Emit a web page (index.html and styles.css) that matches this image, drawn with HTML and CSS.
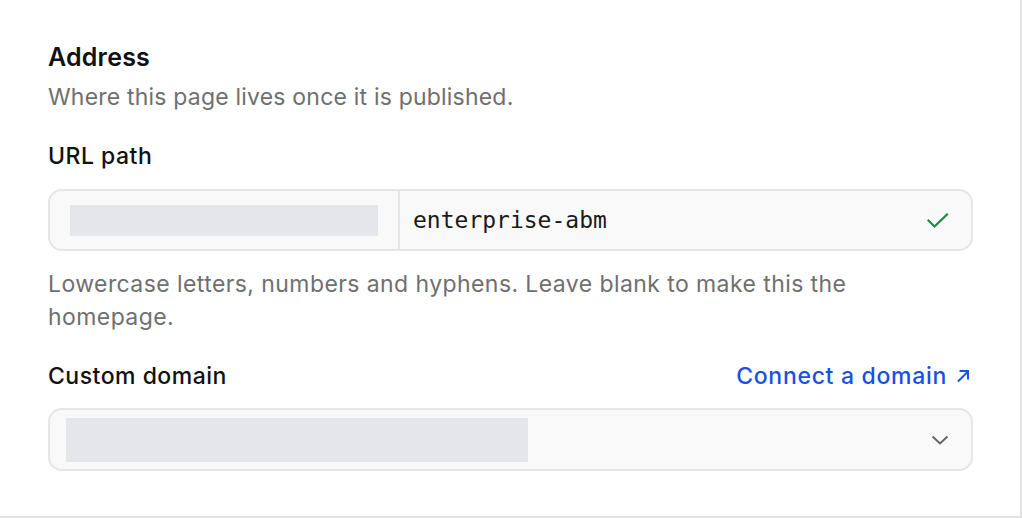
FILE: index.html
```html
<!DOCTYPE html>
<html lang="en">
<head>
<meta charset="utf-8">
<title>Address settings</title>
<link rel="stylesheet" href="styles.css">
</head>
<body>
<section class="panel">
  <h2 class="title">Address</h2>
  <p class="subtitle">Where this page lives once it is published.</p>

  <div class="field url-field">
    <label class="label" for="path">URL path</label>
    <div class="input-group">
      <div class="prefix"><span class="skeleton prefix-skel"></span></div>
      <div class="path">
        <span class="path-text" id="path">enterprise-abm</span>
        <svg class="check" width="22" height="16" viewBox="0 0 22 16" aria-hidden="true">
          <path d="M1.5 7.5 L7.5 13.5 L20 1.5" fill="none" stroke="#1f8a47" stroke-width="2.2" stroke-linecap="square" stroke-linejoin="miter"/>
        </svg>
      </div>
    </div>
    <p class="helper">Lowercase letters, numbers and hyphens. Leave blank to make this the homepage.</p>
  </div>

  <div class="field domain-field">
    <div class="label-row">
      <span class="label">Custom domain</span>
      <a class="link" href="#">Connect a domain <svg class="arrow" width="14" height="14" viewBox="0 0 14 14" aria-hidden="true"><path d="M2 12.5 L12 2.5 M3.5 2 H12 V10.5" fill="none" stroke="currentColor" stroke-width="2"/></svg></a>
    </div>
    <div class="select">
      <span class="skeleton select-skel"></span>
      <svg class="chevron" width="18" height="10" viewBox="0 0 18 10" aria-hidden="true">
        <path d="M1.5 1.5 L9 8.5 L16.5 1.5" fill="none" stroke="#666" stroke-width="2"/>
      </svg>
    </div>
  </div>
</section>
</body>
</html>
```
FILE: styles.css
```css
* { box-sizing: border-box; }
html, body { margin: 0; padding: 0; background: #fff; }
body {
  font-family: Inter, "Noto Sans", "Liberation Sans", sans-serif;
  color: #111;
}
.panel {
  width: 1022px;
  height: 518px;
  border-right: 2px solid #e3e3e3;
  border-bottom: 2px solid #e3e3e3;
  padding: 43px 47px 0 48px;
  overflow: hidden;
}
.title {
  margin: 0;
  font-size: 25px;
  line-height: 28px;
  font-weight: 600;
  letter-spacing: 0.2px;
}
.subtitle {
  margin: 12px 0 0;
  font-size: 23px;
  line-height: 28px;
  color: #6f6f6f;
  letter-spacing: 0.2px;
}
.field { display: flex; flex-direction: column; }
.url-field { margin-top: 31px; }
.domain-field { margin-top: 28px; }
.label {
  font-size: 23px;
  line-height: 28px;
  font-weight: 500;
  color: #111;
  letter-spacing: 0.5px;
}
.input-group {
  margin-top: 19px;
  display: flex;
  height: 62px;
  border: 2px solid #e6e6e6;
  border-radius: 14px;
  background: #f9f9f9;
  overflow: hidden;
}
.prefix {
  width: 350px;
  flex: none;
  display: flex;
  align-items: center;
  padding: 0 20px;
  border-right: 2px solid #e6e6e6;
}
.skeleton { display: block; background: #e5e6ea; }
.prefix-skel { width: 308px; height: 31px; }
.path {
  flex: 1;
  display: flex;
  align-items: center;
  justify-content: space-between;
  padding: 0 22px 0 13px;
}
.path-text {
  font-family: "DejaVu Sans Mono", "Liberation Mono", monospace;
  font-size: 23px;
  color: #1a1a1a;
}
.check { display: block; margin-top: 1px; }
.helper {
  margin: 17px 0 0;
  max-width: 860px;
  font-size: 23px;
  line-height: 33px;
  color: #6f6f6f;
  letter-spacing: 0.42px;
}
.label-row {
  display: flex;
  justify-content: space-between;
  align-items: center;
}
.link {
  color: #1a4fe4;
  text-decoration: none;
  font-size: 23px;
  line-height: 28px;
  font-weight: 500;
  letter-spacing: 0.7px;
  display: flex;
  align-items: center;
  gap: 9px;
  padding-right: 3px;
}
.arrow { display: block; }
.select {
  margin-top: 18px;
  height: 63px;
  border: 2px solid #e6e6e6;
  border-radius: 14px;
  background: #f9f9f9;
  display: flex;
  align-items: center;
  justify-content: space-between;
  padding: 0 22px 0 16px;
}
.select-skel { width: 462px; height: 44px; }
.chevron { display: block; }
```
